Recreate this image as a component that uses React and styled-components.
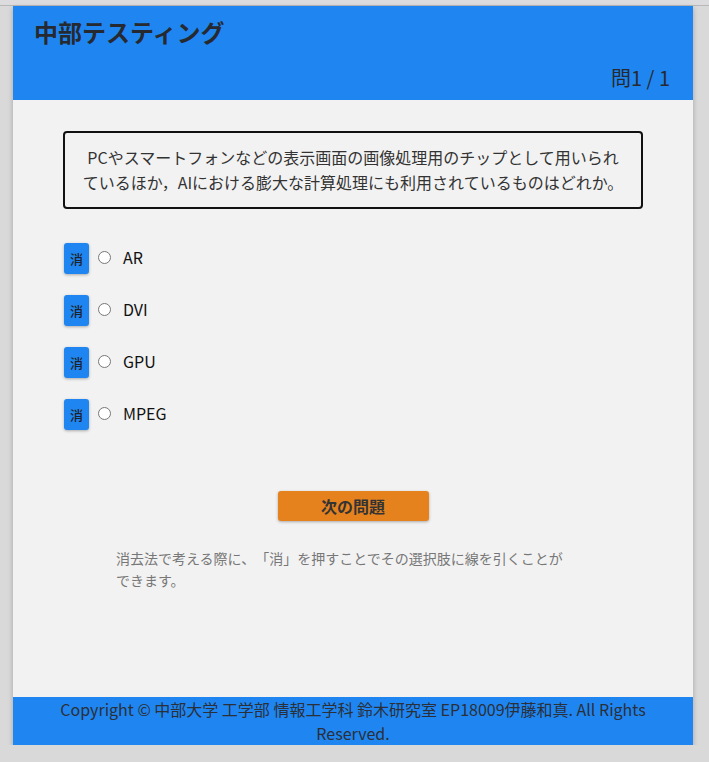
import styled, { createGlobalStyle } from "styled-components";

const GlobalStyle = createGlobalStyle`
  html, body {
    margin: 0;
    padding: 0;
    background: #d9d9d9;
    font-family: "Noto Sans CJK JP", "Noto Sans", sans-serif;
    text-spacing-trim: space-all;
  }
`;

const TopStrip = styled.div`
  height: 5px;
  background: #dcdcdf;
  border-bottom: 1px solid #b8b8b8;
`;

const Card = styled.div`
  width: 680px;
  margin-left: 13px;
  background: #f2f2f2;
  box-shadow: 0 2px 5px rgba(0, 0, 0, 0.25);
  display: flex;
  flex-direction: column;
`;

const Header = styled.header`
  background: #1f86f1;
  height: 94px;
  box-sizing: border-box;
  padding: 10px 23px 8px 21px;
  display: flex;
  flex-direction: column;
  justify-content: space-between;
  color: #262a30;
`;

const Title = styled.h1`
  margin: 0;
  font-size: 24px;
  line-height: 32px;
  font-weight: 700;
`;

const Counter = styled.div`
  align-self: flex-end;
  font-size: 20px;
  line-height: 28px;
`;

const Main = styled.main`
  height: 597px;
  box-sizing: border-box;
  padding: 31px 50px 0;
  display: flex;
  flex-direction: column;
`;

const Question = styled.div`
  border: 2px solid #111;
  border-radius: 4px;
  padding: 12px 17px;
  font-size: 16px;
  line-height: 25px;
  color: #333;
  text-align: center;
`;

const Options = styled.ul`
  list-style: none;
  margin: 34px 0 0;
  padding: 0 0 0 1px;
  display: flex;
  flex-direction: column;
  gap: 21px;
`;

const Option = styled.li`
  display: flex;
  align-items: center;
  height: 31px;
`;

const EraseButton = styled.button`
  width: 25px;
  height: 31px;
  padding: 0;
  border: none;
  border-radius: 3px;
  background: #1f86f1;
  color: #1e2228;
  font-family: inherit;
  font-size: 13px;
  font-weight: 500;
  box-shadow: 0 1px 3px rgba(0, 0, 0, 0.3);
`;

const Radio = styled.input`
  width: 13px;
  height: 13px;
  margin: -3px 12px 0 9px;
`;

const Label = styled.label`
  font-size: 16px;
  line-height: 22px;
  color: #111;
  margin-top: -3px;
`;

const NextButton = styled.button`
  align-self: center;
  margin: 61px 0 0;
  width: 151px;
  height: 30px;
  padding: 0;
  border: none;
  border-radius: 3px;
  background: #e6821e;
  color: #333;
  font-family: inherit;
  font-size: 16px;
  font-weight: 700;
  box-shadow: 0 1px 3px rgba(0, 0, 0, 0.3);
`;

const Note = styled.p`
  margin: 26px 0 0 53px;
  width: 458px;
  font-size: 14px;
  line-height: 22px;
  color: #777;
`;

const Footer = styled.footer`
  background: #1f86f1;
  height: 48px;
  box-sizing: border-box;
  padding: 0 25px;
  font-size: 16px;
  line-height: 24px;
  color: #2a2f38;
  text-align: center;
`;

const choices = ["AR", "DVI", "GPU", "MPEG"];

export default function App() {
  return (
    <>
      <GlobalStyle />
      <TopStrip />
      <Card>
        <Header>
          <Title>中部テスティング</Title>
          <Counter>問1 / 1</Counter>
        </Header>
        <Main>
          <Question>
            PCやスマートフォンなどの表示画面の画像処理用のチップとして用いられているほか，AIにおける膨大な計算処理にも利用されているものはどれか。
          </Question>
          <Options>
            {choices.map((c, i) => (
              <Option key={c}>
                <EraseButton>消</EraseButton>
                <Radio type="radio" name="answer" id={`c${i}`} />
                <Label htmlFor={`c${i}`}>{c}</Label>
              </Option>
            ))}
          </Options>
          <NextButton>次の問題</NextButton>
          <Note>
            消去法で考える際に、「消」を押すことでその選択肢に線を引くことができます。
          </Note>
        </Main>
        <Footer>
          Copyright © 中部大学 工学部 情報工学科 鈴木研究室 EP18009伊藤和真. All Rights Reserved.
        </Footer>
      </Card>
    </>
  );
}
